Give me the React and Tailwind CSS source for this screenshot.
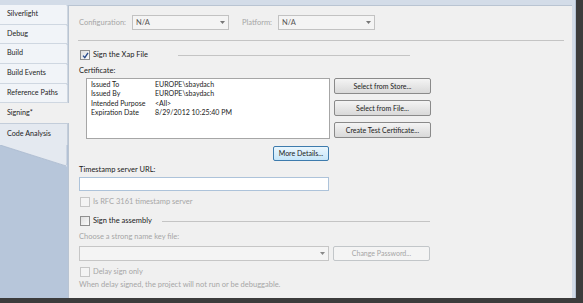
import React from 'react';

const font = { fontFamily: 'Lato, "Open Sans", sans-serif' };

// small square checkbox, Win7 look
const Check = ({ checked = false, disabled = false }) => (
  <span
    className={`w-[10px] h-[10px] shrink-0 border flex items-center justify-center ${
      disabled ? 'border-[#c6c6c6] bg-[#f4f4f4]' : 'border-[#8f8f8f] bg-gradient-to-br from-[#dedede] to-[#fbfbfb]'
    }`}
  >
    {checked && (
      <svg width="7" height="7" viewBox="0 0 7 7">
        <path d="M1 3.6 L2.8 5.6 L6 0.8" stroke="#2a4c8c" strokeWidth="1.4" fill="none" />
      </svg>
    )}
  </span>
);

const Arrow = ({ color = '#444' }) => (
  <svg width="5" height="3" viewBox="0 0 5 3">
    <path d="M0 0 H5 L2.5 3 Z" fill={color} />
  </svg>
);

const Button = ({ children, w = 'w-[97px]', h = 'h-[16px]', focused = false, disabled = false }) => (
  <div
    className={`${w} ${h} shrink-0 rounded-[2px] border flex items-center justify-center text-[7px] ${
      focused
        ? 'border-[#3d7bad] bg-gradient-to-b from-[#eaf6fd] to-[#c6e6f9] text-[#1a1a1a]'
        : disabled
        ? 'border-[#c2c6c9] bg-[#f4f4f4] text-[#a5a5a5]'
        : 'border-[#8a8a8a] bg-gradient-to-b from-[#f4f4f4] to-[#d9d9d9] text-[#1a1a1a]'
    }`}
  >
    {children}
  </div>
);

const tabs = ['Silverlight', 'Debug', 'Build', 'Build Events', 'Reference Paths'];

export default function App() {
  return (
    <div className="w-[583px] h-[303px] bg-[#3c3c3c] overflow-hidden" style={font}>
      <div className="w-[576px] h-[298px] bg-[#d3dce8] flex flex-col border-r border-[#b3c1d3]">
        <div className="h-[5px] shrink-0" />
        <div className="flex flex-1 min-h-0">
          {/* Sidebar tabs */}
          <div className="w-[68px] shrink-0 flex flex-col bg-[#b7c6da] text-[7.2px] text-[#1e1e1e]">
            {tabs.map((t) => (
              <div
                key={t}
                className="h-[19.7px] shrink-0 flex items-center pl-[7px] bg-[#f1f4f8] border-b border-r border-[#cfd7e1] rounded-tr-[2px] whitespace-nowrap"
              >
                {t}
              </div>
            ))}
            <div className="h-[19.7px] shrink-0 flex items-center pl-[7px] bg-[#f0f0f0] w-[69px] relative z-10">
              Signing*
            </div>
            <div className="h-[22px] shrink-0 flex items-center pl-[7px] bg-[#e4e9f0] border-t border-r border-[#c3cdda]">
              Code Analysis
            </div>
            <svg width="68" height="23" viewBox="0 0 68 23" className="shrink-0 block">
              <path d="M0 0 H67 V21.5 Z" fill="#e4e9f0" />
              <path d="M0 0 L64 20.3 Q67 21.3 67 18 V0" stroke="#a9b9ce" strokeWidth="0.8" fill="none" />
            </svg>
          </div>

          {/* Main panel */}
          <div className="flex-1 bg-[#f0f0f0] border-l border-t border-[#b9c4d2] pl-[10px] pr-[8px] flex flex-col text-[7.5px] text-[#1a1a1a]">
            {/* Configuration / Platform */}
            <div className="flex items-center mt-[9px] h-[15px]">
              <span className="text-[#a6a6a6] w-[53px]">Configuration:</span>
              <div className="w-[97px] h-[15px] border border-[#c2c2c2] bg-[#f4f4f4] flex items-center justify-between px-[3px] text-[#555]">
                <span>N/A</span>
                <Arrow color="#777" />
              </div>
              <span className="text-[#a6a6a6] ml-[13px] w-[36px]">Platform:</span>
              <div className="w-[97px] h-[15px] border border-[#c2c2c2] bg-[#f4f4f4] flex items-center justify-between px-[3px] text-[#555]">
                <span>N/A</span>
                <Arrow color="#777" />
              </div>
            </div>
            <div className="mt-[10px] -ml-[1px] border-t border-[#c4c4c4]" />

            {/* Sign the Xap file */}
            <div className="flex items-center mt-[9px] h-[10px] w-[331px] pl-[1px]">
              <Check checked />
              <span className="ml-[3px]">Sign the Xap File</span>
              <div className="flex-1 ml-[30px] border-t border-[#c4c4c4]" />
            </div>

            <div className="mt-[5px] leading-[11px] h-[11px]">Certificate:</div>
            <div className="flex mt-[2px]">
              <div className="ml-[7px] w-[244px] h-[61px] border border-[#a6a6a6] bg-white pt-[1px] pl-[4px] leading-[9.3px] text-[7px]">
                {[
                  ['Issued To', 'EUROPE\\sbaydach'],
                  ['Issued By', 'EUROPE\\sbaydach'],
                  ['Intended Purpose', '<All>'],
                  ['Expiration Date', '8/29/2012 10:25:40 PM'],
                ].map(([k, v]) => (
                  <div key={k} className="flex">
                    <span className="w-[64px]">{k}</span>
                    <span>{v}</span>
                  </div>
                ))}
              </div>
              <div className="ml-[4px] flex flex-col gap-[6px]">
                <Button>Select from Store...</Button>
                <Button>Select from File...</Button>
                <Button>Create Test Certificate...</Button>
              </div>
            </div>
            <div className="w-[250px] flex justify-end mt-[7px]">
              <Button w="w-[56px]" h="h-[15px]" focused>
                More Details...
              </Button>
            </div>

            {/* Timestamp */}
            <div className="mt-[3px] leading-[11px] h-[11px]">Timestamp server URL:</div>
            <div className="mt-[2px] w-[250px] h-[14px] border border-[#adc3da] bg-white" />
            <div className="flex items-center mt-[6px] h-[10px] pl-[1px] text-[#a6a6a6]">
              <Check disabled />
              <span className="ml-[3px]">Is RFC 3161 timestamp server</span>
            </div>

            {/* Sign the assembly */}
            <div className="flex items-center mt-[9px] h-[10px] w-[351px] pl-[1px]">
              <Check />
              <span className="ml-[3px]">Sign the assembly</span>
              <div className="flex-1 ml-[10px] border-t border-[#c4c4c4]" />
            </div>
            <div className="mt-[5px] leading-[11px] h-[11px] text-[#a6a6a6]">Choose a strong name key file:</div>
            <div className="flex mt-[4px] items-center">
              <div className="w-[250px] h-[15px] border border-[#c6c6c6] bg-[#f4f4f4] flex items-center justify-end px-[3px]">
                <Arrow color="#888" />
              </div>
              <div className="ml-[4px]">
                <Button h="h-[15px]" disabled>
                  Change Password...
                </Button>
              </div>
            </div>
            <div className="flex items-center mt-[6px] h-[10px] pl-[1px] text-[#a6a6a6]">
              <Check disabled />
              <span className="ml-[3px]">Delay sign only</span>
            </div>
            <div className="mt-[2px] leading-[11px] h-[11px] text-[#a6a6a6]">
              When delay signed, the project will not run or be debuggable.
            </div>
          </div>
          <div className="w-[3px] shrink-0" />
        </div>
      </div>
    </div>
  );
}
